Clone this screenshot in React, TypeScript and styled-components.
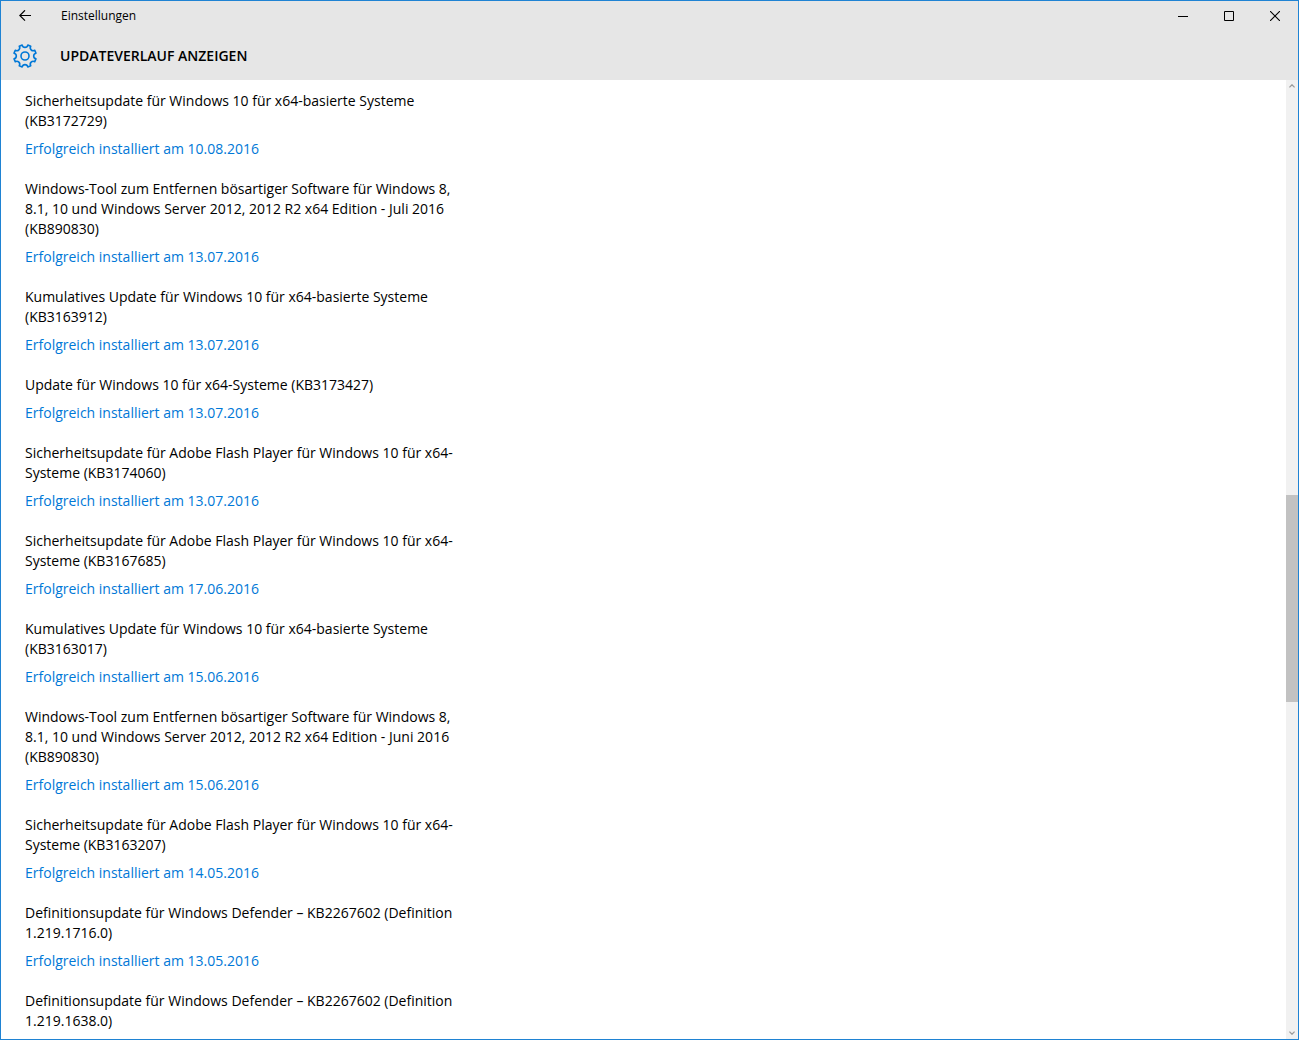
import React from "react";
import styled, { createGlobalStyle } from "styled-components";

const GlobalStyle = createGlobalStyle`
  *, *::before, *::after { box-sizing: border-box; }
  body { margin: 0; font-family: "Open Sans", "Noto Sans", sans-serif; color: #000; background: #fff; }
`;

const Window = styled.div`
  display: flex;
  flex-direction: column;
  height: 100vh;
  border: 1px solid #1f83d3;
  background: #fff;
  overflow: hidden;
`;

const Header = styled.header`
  flex: none;
  background: #e6e6e6;
`;

const TitleBar = styled.div`
  display: flex;
  align-items: center;
  height: 30px;
`;

const IconButton = styled.button<{ $width: number }>`
  display: grid;
  place-items: center;
  width: ${(p) => p.$width}px;
  height: 30px;
  padding: 0;
  border: 0;
  background: transparent;
  color: #000;
`;

const AppName = styled.span`
  flex: 1;
  padding-left: 12px;
  font-size: 12px;
  line-height: 16px;
`;

const PageBar = styled.div`
  display: flex;
  align-items: center;
  gap: 23px;
  height: 49px;
  padding: 1px 12px 0 12px;
`;

const PageTitle = styled.h1`
  margin: 0;
  font-size: 14px;
  font-weight: 600;
  line-height: 20px;
`;

const Body = styled.div`
  display: flex;
  flex: 1;
  min-height: 0;
`;

const Content = styled.main`
  flex: 1;
  overflow: hidden;
  padding: 11px 24px;
`;

const UpdateList = styled.ul`
  display: flex;
  flex-direction: column;
  gap: 20px;
  max-width: 440px;
  margin: 0;
  padding: 0;
  list-style: none;
`;

const UpdateItem = styled.li`
  display: flex;
  flex-direction: column;
  align-items: flex-start;
  gap: 8px;
  font-size: 14px;
  line-height: 20px;
`;

const UpdateName = styled.span``;

const StatusLink = styled.a`
  color: #0078d7;
  text-decoration: none;
`;

const Scrollbar = styled.div`
  display: flex;
  flex-direction: column;
  flex: none;
  width: 12px;
  background: #f1f1f1;
`;

const ScrollButton = styled.button`
  display: grid;
  place-items: center;
  flex: none;
  width: 12px;
  height: 12px;
  padding: 0;
  border: 0;
  background: transparent;
  color: #9a9a9a;
`;

const TrackPart = styled.div<{ $share: number; $thumb?: boolean }>`
  flex: ${(p) => p.$share} 0 0;
  background: ${(p) => (p.$thumb ? "#c2c2c2" : "transparent")};
`;

const TEETH = 8;
const TIP_RADIUS = 11.3;
const TIP_HALF_ANGLE = 8;

function gearPath() {
  const at = (deg: number) => {
    const r = (deg * Math.PI) / 180;
    return `${(12 + TIP_RADIUS * Math.cos(r)).toFixed(2)} ${(12 + TIP_RADIUS * Math.sin(r)).toFixed(2)}`;
  };
  let d = "";
  for (let i = 0; i < TEETH; i++) {
    const mid = 22.5 + i * 45;
    d += `${i === 0 ? "M" : "A2.9 2.9 0 0 0 "}${at(mid - TIP_HALF_ANGLE)}L${at(mid + TIP_HALF_ANGLE)}`;
  }
  return `${d}A2.9 2.9 0 0 0 ${at(22.5 - TIP_HALF_ANGLE)}Z`;
}

const GearIcon = () => (
  <svg width="24" height="24" viewBox="0 0 24 24" fill="none" stroke="#0078d7" strokeWidth="1.6" strokeLinejoin="round" aria-hidden="true">
    <path d={gearPath()} />
    <circle cx="12" cy="12" r="4" />
  </svg>
);

const BackIcon = () => (
  <svg width="12" height="12" viewBox="0 0 12 12" fill="none" stroke="currentColor" strokeWidth="1.2" aria-hidden="true">
    <path d="M12 5.5H.8M6 .3.8 5.5 6 10.7" />
  </svg>
);

const MinimizeIcon = () => (
  <svg width="10" height="10" viewBox="0 0 10 10" stroke="currentColor" aria-hidden="true">
    <path d="M0 5.5H10" />
  </svg>
);

const MaximizeIcon = () => (
  <svg width="10" height="10" viewBox="0 0 10 10" fill="none" stroke="currentColor" aria-hidden="true">
    <path d="M.5.5h9v9h-9z" />
  </svg>
);

const CloseIcon = () => (
  <svg width="10" height="10" viewBox="0 0 10 10" stroke="currentColor" strokeWidth="1.1" aria-hidden="true">
    <path d="M0 0 10 10M10 0 0 10" />
  </svg>
);

const ChevronIcon = ({ d }: { d: string }) => (
  <svg width="6" height="4" viewBox="0 0 6 4" fill="none" stroke="currentColor" strokeWidth="1.3" aria-hidden="true">
    <path d={d} />
  </svg>
);

const updates = [
  { name: "Sicherheitsupdate für Windows 10 für x64-basierte Systeme (KB3172729)", date: "10.08.2016" },
  { name: "Windows-Tool zum Entfernen bösartiger Software für Windows 8, 8.1, 10 und Windows Server 2012, 2012 R2 x64 Edition - Juli 2016 (KB890830)", date: "13.07.2016" },
  { name: "Kumulatives Update für Windows 10 für x64-basierte Systeme (KB3163912)", date: "13.07.2016" },
  { name: "Update für Windows 10 für x64-Systeme (KB3173427)", date: "13.07.2016" },
  { name: "Sicherheitsupdate für Adobe Flash Player für Windows 10 für x64-Systeme (KB3174060)", date: "13.07.2016" },
  { name: "Sicherheitsupdate für Adobe Flash Player für Windows 10 für x64-Systeme (KB3167685)", date: "17.06.2016" },
  { name: "Kumulatives Update für Windows 10 für x64-basierte Systeme (KB3163017)", date: "15.06.2016" },
  { name: "Windows-Tool zum Entfernen bösartiger Software für Windows 8, 8.1, 10 und Windows Server 2012, 2012 R2 x64 Edition - Juni 2016 (KB890830)", date: "15.06.2016" },
  { name: "Sicherheitsupdate für Adobe Flash Player für Windows 10 für x64-Systeme (KB3163207)", date: "14.05.2016" },
  { name: "Definitionsupdate für Windows Defender – KB2267602 (Definition 1.219.1716.0)", date: "13.05.2016" },
  { name: "Definitionsupdate für Windows Defender – KB2267602 (Definition 1.219.1638.0)", date: "" },
];

export default function App() {
  return (
    <>
      <GlobalStyle />
      <Window>
        <Header>
          <TitleBar>
            <IconButton $width={48} aria-label="Zurück"><BackIcon /></IconButton>
            <AppName>Einstellungen</AppName>
            <IconButton $width={46} aria-label="Minimieren"><MinimizeIcon /></IconButton>
            <IconButton $width={46} aria-label="Maximieren"><MaximizeIcon /></IconButton>
            <IconButton $width={46} aria-label="Schließen"><CloseIcon /></IconButton>
          </TitleBar>
          <PageBar>
            <GearIcon />
            <PageTitle>UPDATEVERLAUF ANZEIGEN</PageTitle>
          </PageBar>
        </Header>
        <Body>
          <Content>
            <UpdateList>
              {updates.map((u) => (
                <UpdateItem key={u.name}>
                  <UpdateName>{u.name}</UpdateName>
                  {u.date && <StatusLink href="#">Erfolgreich installiert am {u.date}</StatusLink>}
                </UpdateItem>
              ))}
            </UpdateList>
          </Content>
          <Scrollbar>
            <ScrollButton aria-label="Nach oben"><ChevronIcon d="M.4 3.4 3 .8 5.6 3.4" /></ScrollButton>
            <TrackPart $share={403} />
            <TrackPart $share={207} $thumb />
            <TrackPart $share={325} />
            <ScrollButton aria-label="Nach unten"><ChevronIcon d="M.4.6 3 3.2 5.6.6" /></ScrollButton>
          </Scrollbar>
        </Body>
      </Window>
    </>
  );
}
